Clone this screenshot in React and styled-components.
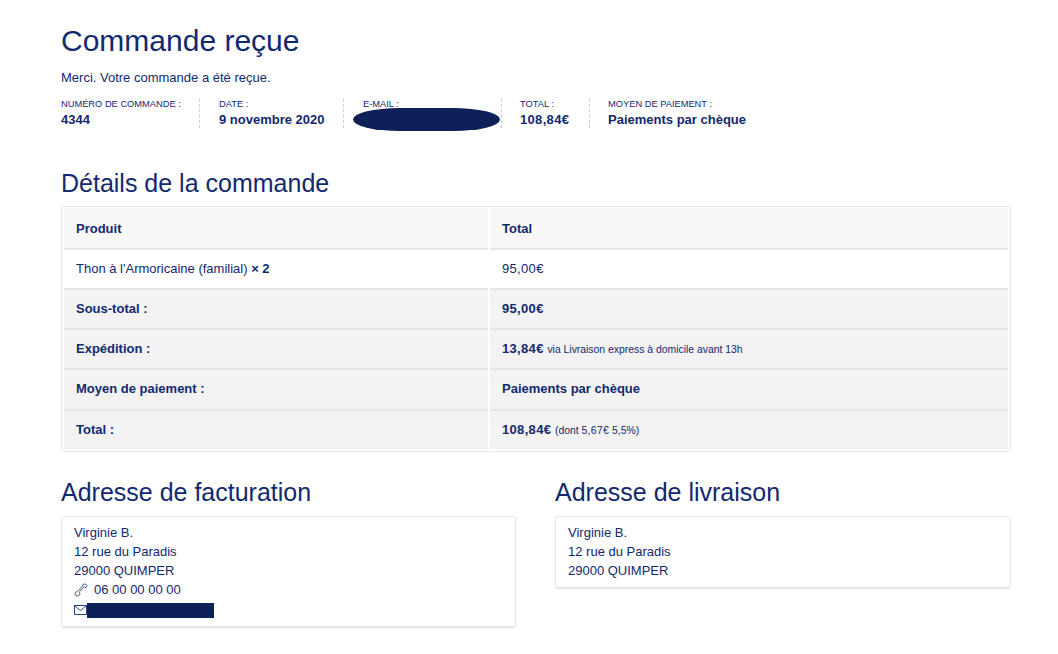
import React from "react";
import styled, { createGlobalStyle } from "styled-components";

const ink = "#12296f";

const Global = createGlobalStyle`
  html, body { margin: 0; padding: 0; background: #fff; }
  body { font-family: "Liberation Sans", Arial, sans-serif; color: ${ink}; -webkit-font-smoothing: antialiased; }
`;
const Page = styled.main`
  width: 950px;
  height: 654px;
  overflow: hidden;
  margin-left: 61px;
  padding-top: 23px;
  box-sizing: border-box;
`;
const Title = styled.h1`
  margin: 0;
  font-size: 30px;
  line-height: 36px;
  font-weight: 400;
`;
const Thanks = styled.p`
  margin: 11px 0 0;
  font-size: 13px;
  line-height: 16px;
`;
const Overview = styled.ul`
  list-style: none;
  margin: 13px 0 0;
  padding: 0;
  display: flex;
  height: 29px;
`;
const OverviewItem = styled.li`
  width: ${(p) => p.$w}px;
  box-sizing: border-box;
  padding-left: ${(p) => p.$pad}px;
  border-right: ${(p) => (p.$last ? "0" : "1px dashed #ccc")};
  font-size: 9.3px;
  line-height: 11px;
  position: relative;
  text-transform: uppercase;
`;
const OverviewValue = styled.strong`
  display: block;
  margin-top: 2px;
  font-size: 13px;
  line-height: 15px;
  text-transform: none;
`;
const Money = styled.span`
  letter-spacing: 0.33px;
`;
const Scribble = styled.span`
  position: absolute;
  left: 9px;
  top: 9px;
  width: 147px;
  height: 23px;
  border-radius: 32% / 50%;
  background: #0e2058;
`;
const H2 = styled.h2`
  margin: 0;
  font-size: 25px;
  line-height: 30px;
  font-weight: 400;
`;
const DetailsHead = styled(H2)`
  margin-top: 40px;
`;
const Table = styled.table`
  width: 950px;
  margin-top: 8px;
  box-sizing: border-box;
  table-layout: fixed;
  border: 1px solid #e8e8e8;
  border-radius: 4px;
  border-collapse: separate;
  border-spacing: 2px 0;
  padding: 1px 0 2px;
  font-size: 13px;
`;
const Cell = styled.td`
  box-sizing: border-box;
  padding: 0 12px ${(p) => (p.$tone === "head" ? "0" : "2px")};
  height: ${(p) => (p.$tall ? 41 : 40)}px;
  font-weight: ${(p) => (p.$bold ? 700 : 400)};
  background-color: ${(p) => (p.$tone === "head" ? "#f8f8f8" : p.$tone === "foot" ? "#f3f3f3" : "#fff")};
  background-image: ${(p) =>
    p.$tone === "foot"
      ? "linear-gradient(#f3f3f3 35%, rgba(243, 243, 243, 0) 100%), radial-gradient(#e2e2e2 0.55px, transparent 0.75px)"
      : "none"};
  background-size: 100% 100%, 4px 4px;
  border-top: ${(p) => (p.$tone === "head" ? "0" : "2px solid #e5e5e5")};
  text-align: left;
`;
const Note = styled.small`
  font-size: 10.4px;
  font-weight: 400;
`;
const Addresses = styled.div`
  display: grid;
  grid-template-columns: 455px 456px;
  gap: 39px;
  align-items: start;
  margin-top: 25px;
`;
const Card = styled.address`
  margin-top: 9px;
  padding: 6px 12px 7px;
  border: 1px solid #e6e6e6;
  border-radius: 3px;
  box-shadow: 0 1px 2px rgba(0, 0, 0, 0.12);
  font-style: normal;
  font-size: 13px;
  line-height: 19px;
`;
const Line = styled.div`
  display: flex;
  align-items: center;
  height: 19px;
`;
const MailLine = styled(Line)`
  margin-bottom: 1px;
  align-items: flex-end;
`;
const PhoneIcon = styled.svg`
  width: 14px;
  height: 14px;
  margin-right: 6px;
  flex: none;
`;
const MailIcon = styled.svg`
  width: 13px;
  height: 10px;
  margin-bottom: 3px;
  flex: none;
`;
const Redact = styled.span`
  display: block;
  width: 127px;
  height: 15px;
  background: #0e2058;
`;

const rows = [
  { label: "Sous-total :", value: <Money>95,00€</Money> },
  { label: "Expédition :", value: <><Money>13,84€</Money> <Note>via Livraison express à domicile avant 13h</Note></> },
  { label: "Moyen de paiement :", value: "Paiements par chèque", tall: true },
  { label: "Total :", value: <><Money>108,84€</Money> <Note>(dont <Money>5,67€</Money> 5,5%)</Note></> },
];

export default function App() {
  return (
    <Page>
      <Global />
      <Title>Commande reçue</Title>
      <Thanks>Merci. Votre commande a été reçue.</Thanks>
      <Overview>
        <OverviewItem $w={139} $pad={0}>Numéro de commande :<OverviewValue>4344</OverviewValue></OverviewItem>
        <OverviewItem $w={144} $pad={19}>Date :<OverviewValue>9 novembre 2020</OverviewValue></OverviewItem>
        <OverviewItem $w={158} $pad={19}>E-mail :<Scribble /></OverviewItem>
        <OverviewItem $w={88} $pad={18}>Total :<OverviewValue><Money>108,84€</Money></OverviewValue></OverviewItem>
        <OverviewItem $w={200} $pad={18} $last>Moyen de paiement :<OverviewValue>Paiements par chèque</OverviewValue></OverviewItem>
      </Overview>
      <DetailsHead>Détails de la commande</DetailsHead>
      <Table>
        <colgroup><col style={{ width: 424 }} /><col /></colgroup>
        <thead>
          <tr>
            <Cell as="th" $tone="head" $bold>Produit</Cell>
            <Cell as="th" $tone="head" $bold>Total</Cell>
          </tr>
        </thead>
        <tbody>
          <tr>
            <Cell>Thon à l'Armoricaine (familial) <strong>× 2</strong></Cell>
            <Cell><Money>95,00€</Money></Cell>
          </tr>
          {rows.map(({ label, value, tall }) => (
            <tr key={label}>
              <Cell $tone="foot" $bold $tall={tall}>{label}</Cell>
              <Cell $tone="foot" $bold $tall={tall}>{value}</Cell>
            </tr>
          ))}
        </tbody>
      </Table>
      <Addresses>
        <section>
          <H2>Adresse de facturation</H2>
          <Card>
            <Line>Virginie B.</Line>
            <Line>12 rue du Paradis</Line>
            <Line>29000 QUIMPER</Line>
            <Line>
              <PhoneIcon viewBox="0 0 14 14" fill="none" stroke={ink} strokeWidth="0.8" strokeLinejoin="round">
                <path d="M9 1.6 Q10.5 0.5 12 1.4 L12.8 2.3 Q13.3 3.6 12 4.6 L11 4.3 Q10.3 3.5 9.7 4.1 L5.5 8.8 Q5 9.5 5.8 10.2 L6 11 Q5.5 12.5 3.5 12.9 L2.2 12.8 Q0.8 12 1 10.5 Q1.5 9 3.5 8.2 L8.5 3 Q8.6 2 9 1.6 Z" />
              </PhoneIcon>
              06 00 00 00 00
            </Line>
            <MailLine>
              <MailIcon viewBox="0 0 13 10" fill="none" stroke={ink} strokeWidth="0.9">
                <path d="M0.5 0.5 H12.5 V9.5 H0.5 Z M0.7 0.7 L6.5 5.6 L12.3 0.7" />
              </MailIcon>
              <Redact />
            </MailLine>
          </Card>
        </section>
        <section>
          <H2>Adresse de livraison</H2>
          <Card>
            <Line>Virginie B.</Line>
            <Line>12 rue du Paradis</Line>
            <Line>29000 QUIMPER</Line>
          </Card>
        </section>
      </Addresses>
    </Page>
  );
}
